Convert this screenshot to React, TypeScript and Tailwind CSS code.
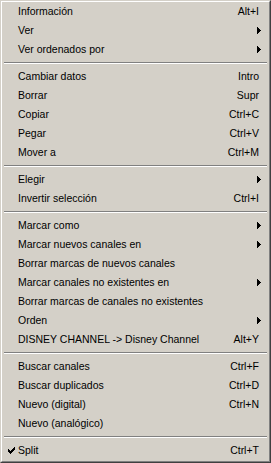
type Item =
  | { kind: "item"; label: string; shortcut?: string; submenu?: boolean; checked?: boolean }
  | { kind: "sep" };

const items: Item[] = [
  { kind: "item", label: "Información", shortcut: "Alt+I" },
  { kind: "item", label: "Ver", submenu: true },
  { kind: "item", label: "Ver ordenados por", submenu: true },
  { kind: "sep" },
  { kind: "item", label: "Cambiar datos", shortcut: "Intro" },
  { kind: "item", label: "Borrar", shortcut: "Supr" },
  { kind: "item", label: "Copiar", shortcut: "Ctrl+C" },
  { kind: "item", label: "Pegar", shortcut: "Ctrl+V" },
  { kind: "item", label: "Mover a", shortcut: "Ctrl+M" },
  { kind: "sep" },
  { kind: "item", label: "Elegir", submenu: true },
  { kind: "item", label: "Invertir selección", shortcut: "Ctrl+I" },
  { kind: "sep" },
  { kind: "item", label: "Marcar como", submenu: true },
  { kind: "item", label: "Marcar nuevos canales en", submenu: true },
  { kind: "item", label: "Borrar marcas de nuevos canales" },
  { kind: "item", label: "Marcar canales no existentes en", submenu: true },
  { kind: "item", label: "Borrar marcas de canales no existentes" },
  { kind: "item", label: "Orden", submenu: true },
  { kind: "item", label: "DISNEY CHANNEL -> Disney Channel", shortcut: "Alt+Y" },
  { kind: "sep" },
  { kind: "item", label: "Buscar canales", shortcut: "Ctrl+F" },
  { kind: "item", label: "Buscar duplicados", shortcut: "Ctrl+D" },
  { kind: "item", label: "Nuevo (digital)", shortcut: "Ctrl+N" },
  { kind: "item", label: "Nuevo (analógico)" },
  { kind: "sep" },
  { kind: "item", label: "Split", shortcut: "Ctrl+T", checked: true },
];

function SubArrow() {
  return (
    <svg width="4" height="7" viewBox="0 0 4 7" shapeRendering="crispEdges" className="-mr-[2px]">
      <rect x="0" y="0" width="1" height="7" fill="#000" />
      <rect x="1" y="1" width="1" height="5" fill="#000" />
      <rect x="2" y="2" width="1" height="3" fill="#000" />
      <rect x="3" y="3" width="1" height="1" fill="#000" />
    </svg>
  );
}

function Check() {
  // pixel check mark like the classic menu one
  const px: [number, number][] = [
    [6, 0],
    [5, 1], [6, 1],
    [0, 2], [4, 2], [5, 2], [6, 2],
    [0, 3], [1, 3], [3, 3], [4, 3], [5, 3],
    [0, 4], [1, 4], [2, 4], [3, 4], [4, 4],
    [1, 5], [2, 5], [3, 5],
    [2, 6],
  ];
  return (
    <svg width="7" height="7" viewBox="0 0 7 7" shapeRendering="crispEdges">
      {px.map(([x, y]) => (
        <rect key={`${x}-${y}`} x={x} y={y} width="1" height="1" fill="#000" />
      ))}
    </svg>
  );
}

export default function App() {
  return (
    <div
      className="w-[271px] h-[463px] bg-[#d4d0c8] border border-t-[#d4d0c8] border-l-[#d4d0c8] border-r-[#404040] border-b-[#404040] text-black text-[10.5px]"
      style={{ fontFamily: '"Liberation Sans", Arial, sans-serif' }}
    >
      <div className="h-full border border-t-white border-l-white border-r-[#808080] border-b-[#808080]">
        {items.map((it, i) =>
          it.kind === "sep" ? (
            <div key={i} className="h-[8px] pt-[3px] px-[2px]">
              <div className="h-px bg-[#808080]" />
              <div className="h-px bg-white" />
            </div>
          ) : (
            <div key={i} className="flex items-center h-[19px] pr-[10px]">
              <div className="w-[16px] flex justify-end items-center pr-[3px]">
                {it.checked && <Check />}
              </div>
              <span className="flex-1 whitespace-nowrap">{it.label}</span>
              {it.shortcut && <span className="whitespace-nowrap">{it.shortcut}</span>}
              {it.submenu && <SubArrow />}
            </div>
          )
        )}
      </div>
    </div>
  );
}
